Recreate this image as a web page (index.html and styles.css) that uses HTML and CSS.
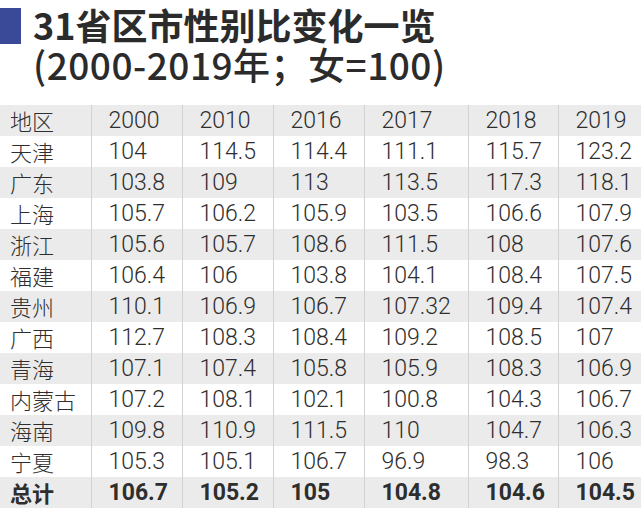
FILE: index.html
```html
<!DOCTYPE html>
<html lang="zh">
<head>
<meta charset="utf-8">
<link rel="stylesheet" href="styles.css">
</head>
<body>
<div class="page">
  <div class="head">
    <div class="mark"></div>
    <div class="titles">
      <div class="t1">31省区市性别比变化一览</div>
      <div class="t2">(2000-2019年；女=100)</div>
    </div>
  </div>
  <table class="data">
    <colgroup>
      <col class="c0"><col class="c1"><col class="c2"><col class="c3"><col class="c4"><col class="c5"><col class="c6">
    </colgroup>
    <tr class="g"><td class="r">地区</td><td>2000</td><td>2010</td><td>2016</td><td>2017</td><td>2018</td><td>2019</td></tr>
    <tr><td class="r">天津</td><td>104</td><td>114.5</td><td>114.4</td><td>111.1</td><td>115.7</td><td>123.2</td></tr>
    <tr class="g"><td class="r">广东</td><td>103.8</td><td>109</td><td>113</td><td>113.5</td><td>117.3</td><td>118.1</td></tr>
    <tr><td class="r">上海</td><td>105.7</td><td>106.2</td><td>105.9</td><td>103.5</td><td>106.6</td><td>107.9</td></tr>
    <tr class="g"><td class="r">浙江</td><td>105.6</td><td>105.7</td><td>108.6</td><td>111.5</td><td>108</td><td>107.6</td></tr>
    <tr><td class="r">福建</td><td>106.4</td><td>106</td><td>103.8</td><td>104.1</td><td>108.4</td><td>107.5</td></tr>
    <tr class="g"><td class="r">贵州</td><td>110.1</td><td>106.9</td><td>106.7</td><td>107.32</td><td>109.4</td><td>107.4</td></tr>
    <tr><td class="r">广西</td><td>112.7</td><td>108.3</td><td>108.4</td><td>109.2</td><td>108.5</td><td>107</td></tr>
    <tr class="g"><td class="r">青海</td><td>107.1</td><td>107.4</td><td>105.8</td><td>105.9</td><td>108.3</td><td>106.9</td></tr>
    <tr><td class="r">内蒙古</td><td>107.2</td><td>108.1</td><td>102.1</td><td>100.8</td><td>104.3</td><td>106.7</td></tr>
    <tr class="g"><td class="r">海南</td><td>109.8</td><td>110.9</td><td>111.5</td><td>110</td><td>104.7</td><td>106.3</td></tr>
    <tr><td class="r">宁夏</td><td>105.3</td><td>105.1</td><td>106.7</td><td>96.9</td><td>98.3</td><td>106</td></tr>
    <tr class="g total"><td class="r">总计</td><td>106.7</td><td>105.2</td><td>105</td><td>104.8</td><td>104.6</td><td>104.5</td></tr>
  </table>
</div>
</body>
</html>
```

FILE: styles.css
```css
html, body {
  margin: 0;
  padding: 0;
  background: #ffffff;
}
.page {
  width: 641px;
  height: 508px;
  overflow: hidden;
}
.head {
  display: flex;
  align-items: flex-start;
  height: 105px;
}
.mark {
  width: 21px;
  height: 36px;
  margin-top: 8px;
  background: #3b4a98;
}
.titles {
  margin-left: 12px;
  color: #2b2b2b;
  font-family: "Noto Sans CJK SC", "Noto Sans", sans-serif;
  font-size: 36px;
  line-height: 40px;
  padding-top: 4px;
}
.t1 {
  font-weight: 700;
  height: 40px;
}
.t2 {
  font-weight: 500;
  letter-spacing: 0.5px;
  height: 40px;
  font-size: 37px;
}
.data {
  border-collapse: collapse;
  table-layout: fixed;
  width: 641px;
  font-family: Roboto, "Liberation Sans", "Noto Sans CJK SC", sans-serif;
  font-weight: 300;
  font-size: 23px;
  color: #2e2e2e;
}
.c0 { width: 91px; }
.c1 { width: 91px; }
.c2 { width: 91px; }
.c3 { width: 91px; }
.c4 { width: 104px; }
.c5 { width: 90px; }
.c6 { width: 83px; }
.data td {
  height: 31px;
  padding: 0 0 0 17px;
  border-left: 1px solid #d2d2d2;
  white-space: nowrap;
  vertical-align: middle;
  line-height: 31px;
}
.data td.r {
  border-left: none;
  padding-left: 10px;
  font-family: "Noto Sans CJK SC", sans-serif;
  font-weight: 300;
  font-size: 22px;
}
.data tr.g td {
  background: #ebebeb;
}
.data tr.total td {
  font-weight: 700;
}
.data tr.total td.r {
  font-weight: 700;
}
```
